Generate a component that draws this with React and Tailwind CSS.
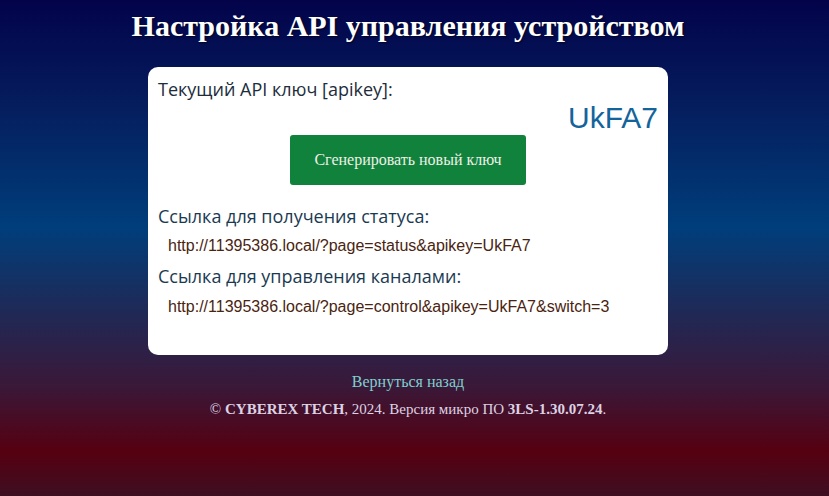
export default function App() {
  return (
    <div className="w-full min-h-[496px] flex flex-col items-center pr-[13px] bg-[linear-gradient(180deg,#03034a_0%,#051e5e_22%,#003e7b_46%,#1e2a58_62%,#3a1838_78%,#560011_91%,#3e0f22_100%)]">
      <h1 className="mt-[8px] text-[30px] leading-[36px] font-bold text-white font-['Liberation_Serif',serif] [text-shadow:1px_1px_2px_rgba(0,0,0,0.6)]">
        Настройка API управления устройством
      </h1>
      <div className="mt-[23px] w-[520px] h-[288px] bg-white rounded-[10px] px-[10px] pt-[10px] flex flex-col">
        <div className="text-[18px] leading-[24px] text-[#1c2d3c] font-['Open_Sans',sans-serif]">
          Текущий API ключ [apikey]:
        </div>
        <div className="text-right text-[30px] leading-[32px] text-[#14649c] font-['Liberation_Sans',sans-serif] mt-[1px]">
          UkFA7
        </div>
        <div className="flex justify-center mt-[1px]">
          <button className="w-[236px] h-[50px] bg-[#10823c] rounded-[3px] text-[16px] text-[#f0f0e8] font-['Liberation_Serif',serif]">
            Сгенерировать новый ключ
          </button>
        </div>
        <div className="mt-[19px] text-[18px] leading-[24px] text-[#1a3a52] font-['Open_Sans',sans-serif]">
          Ссылка для получения статуса:
        </div>
        <div className="mt-[8px] ml-[10px] text-[16px] leading-[20px] text-[#4a2410] font-['Liberation_Sans',sans-serif]">
          http://11395386.local/?page=status&amp;apikey=UkFA7
        </div>
        <div className="mt-[8px] text-[18px] leading-[24px] text-[#1a3a52] font-['Open_Sans',sans-serif]">
          Ссылка для управления каналами:
        </div>
        <div className="mt-[9px] ml-[10px] text-[16px] leading-[20px] text-[#4a2410] font-['Liberation_Sans',sans-serif]">
          http://11395386.local/?page=control&amp;apikey=UkFA7&amp;switch=3
        </div>
      </div>
      <a className="mt-[17px] text-[16px] leading-[20px] text-[#7fd0d0] font-['Liberation_Serif',serif]">
        Вернуться назад
      </a>
      <div className="mt-[7px] text-[15px] leading-[20px] text-[#dcd2e4] font-['Liberation_Serif',serif]">
        © <b>CYBEREX TECH</b>, 2024. Версия микро ПО <b>3LS-1.30.07.24</b>.
      </div>
    </div>
  );
}
